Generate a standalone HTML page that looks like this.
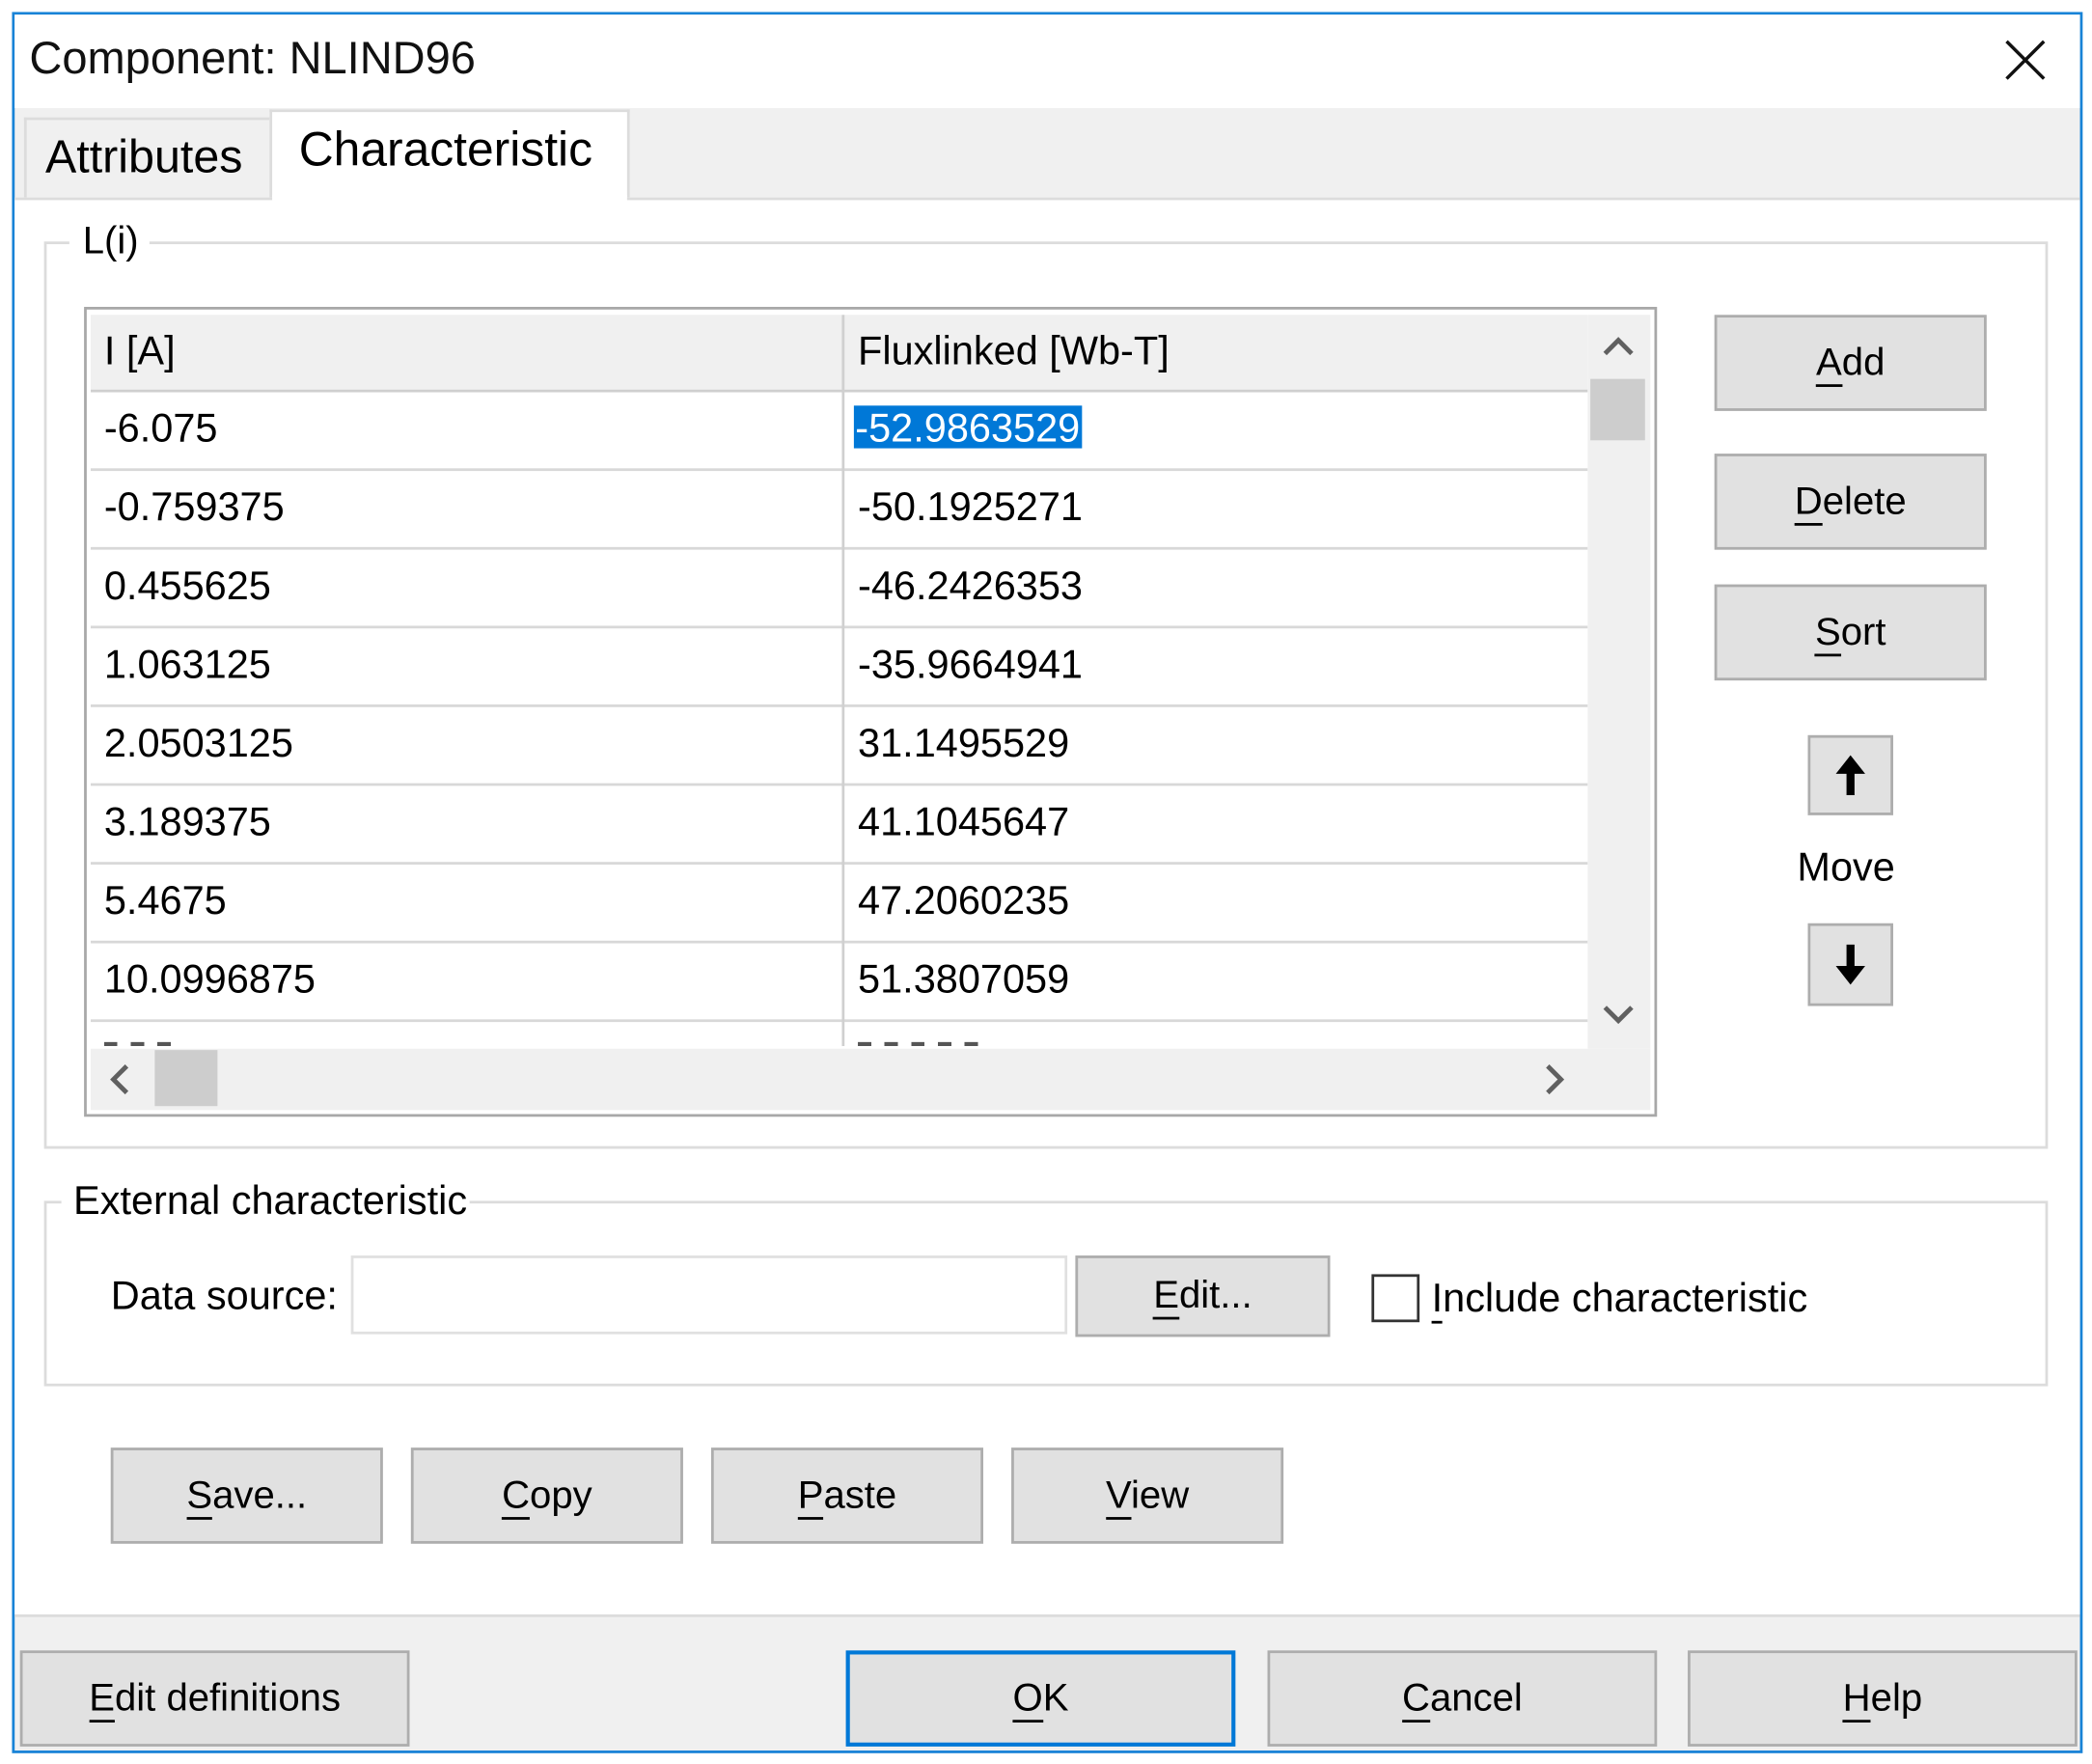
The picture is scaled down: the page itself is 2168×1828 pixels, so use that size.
<!DOCTYPE html>
<html><head><meta charset="utf-8"><style>
html,body{margin:0;padding:0;background:#fff;width:2168px;height:1828px;overflow:hidden}
#s{position:absolute;left:0;top:0;width:1568px;height:1322px;transform:scale(1.38265);transform-origin:0 0;font-family:"Liberation Sans",sans-serif;color:#000}
.a{position:absolute;box-sizing:border-box}
.t{position:absolute;white-space:nowrap;font-size:29px;line-height:1}
.btn{position:absolute;box-sizing:border-box;background:#e1e1e1;border:2px solid #adadad;display:flex;align-items:center;justify-content:center;font-size:29px}
.hl{position:absolute;left:68px;width:1122px;height:2px;background:#d8d8d8}
u{text-decoration:none;border-bottom:2px solid #000;line-height:0.95}
</style></head><body><div id="s">
<div class="a" style="left:9px;top:9px;width:1552px;height:1305px;border:2px solid #1883d7;background:#f0f0f0"></div>
<div class="a" style="left:11px;top:11px;width:1548px;height:70px;background:#fff"></div>
<div class="t" style="left:22px;top:27px;font-size:34px;color:#111">Component: NLIND96</div>
<svg class="a" style="left:1502px;top:29px" width="32" height="32"><path d="M2 2L30 30M30 2L2 30" stroke="#111" stroke-width="2.5"/></svg>
<div class="a" style="left:18px;top:88px;width:186px;height:62px;background:#f0f0f0;border:2px solid #dcdcdc;border-bottom:none"></div>
<div class="t" style="left:34px;top:100px;font-size:35px">Attributes</div>
<div class="a" style="left:202px;top:82px;width:270px;height:68px;background:#fff;border:2px solid #dcdcdc;border-bottom:none"></div>
<div class="a" style="left:11px;top:148px;width:1548px;height:1062px;background:#fff;border-top:2px solid #dcdcdc"></div>
<div class="a" style="left:204px;top:146px;width:266px;height:6px;background:#fff"></div>
<div class="t" style="left:224px;top:94px;font-size:36px">Characteristic</div>
<div class="a" style="left:33px;top:181px;width:1502px;height:680px;border:2px solid #dcdcdc"></div>
<div class="a" style="left:52px;top:165px;width:60px;height:30px;background:#fff"></div>
<div class="t" style="left:62px;top:167px;font-size:29px">L(i)</div>
<div class="a" style="left:63px;top:230px;width:1179px;height:607px;border:2px solid #a8a8a8;background:#fff"></div>
<div class="a" style="left:68px;top:236px;width:1122px;height:56px;background:#f0f0f0"></div>
<div class="hl" style="top:292px;background:#cfcfcf"></div>
<div class="hl" style="top:351px"></div><div class="hl" style="top:410px"></div><div class="hl" style="top:469px"></div><div class="hl" style="top:528px"></div><div class="hl" style="top:587px"></div><div class="hl" style="top:646px"></div><div class="hl" style="top:705px"></div><div class="hl" style="top:764px"></div>
<div class="a" style="left:631px;top:236px;width:2px;height:548px;background:#d0d0d0"></div>
<div class="t" style="left:78px;top:249px;font-size:30px">I [A]</div>
<div class="t" style="left:643px;top:249px;font-size:30px">Fluxlinked [Wb-T]</div>
<div class="a" style="left:640px;top:304px;width:171px;height:32px;background:#0078d7"></div>
<div class="t" style="left:78px;top:307px;font-size:30px">-6.075</div><div class="t" style="left:641px;top:307px;color:#fff;font-size:30px">-52.9863529</div>
<div class="t" style="left:78px;top:366px;font-size:30px">-0.759375</div><div class="t" style="left:643px;top:366px;font-size:30px">-50.1925271</div>
<div class="t" style="left:78px;top:425px;font-size:30px">0.455625</div><div class="t" style="left:643px;top:425px;font-size:30px">-46.2426353</div>
<div class="t" style="left:78px;top:484px;font-size:30px">1.063125</div><div class="t" style="left:643px;top:484px;font-size:30px">-35.9664941</div>
<div class="t" style="left:78px;top:543px;font-size:30px">2.0503125</div><div class="t" style="left:643px;top:543px;font-size:30px">31.1495529</div>
<div class="t" style="left:78px;top:602px;font-size:30px">3.189375</div><div class="t" style="left:643px;top:602px;font-size:30px">41.1045647</div>
<div class="t" style="left:78px;top:661px;font-size:30px">5.4675</div><div class="t" style="left:643px;top:661px;font-size:30px">47.2060235</div>
<div class="t" style="left:78px;top:720px;font-size:30px">10.0996875</div><div class="t" style="left:643px;top:720px;font-size:30px">51.3807059</div>
<div class="a" style="left:78px;top:781px;width:60px;height:3px;background:repeating-linear-gradient(90deg,#555 0 10px,#fff 10px 20px)"></div>
<div class="a" style="left:643px;top:781px;width:92px;height:3px;background:repeating-linear-gradient(90deg,#555 0 10px,#fff 10px 20px)"></div>
<div class="a" style="left:1190px;top:236px;width:47px;height:550px;background:#f0f0f0"></div>
<div class="a" style="left:1192px;top:284px;width:41px;height:46px;background:#cdcdcd"></div>
<svg class="a" style="left:1200px;top:250px" width="26" height="20"><path d="M3 15L13 5L23 15" stroke="#606060" stroke-width="3.5" fill="none"/></svg>
<svg class="a" style="left:1200px;top:750px" width="26" height="20"><path d="M3 5L13 15L23 5" stroke="#606060" stroke-width="3.5" fill="none"/></svg>
<div class="a" style="left:68px;top:786px;width:1169px;height:46px;background:#f0f0f0"></div>
<div class="a" style="left:116px;top:787px;width:47px;height:42px;background:#cdcdcd"></div>
<svg class="a" style="left:80px;top:796px" width="20" height="26"><path d="M15 3L5 13L15 23" stroke="#606060" stroke-width="3.5" fill="none"/></svg>
<svg class="a" style="left:1155px;top:796px" width="20" height="26"><path d="M5 3L15 13L5 23" stroke="#606060" stroke-width="3.5" fill="none"/></svg>
<div class="btn" style="left:1285px;top:236px;width:204px;height:72px"><span><u>A</u>dd</span></div>
<div class="btn" style="left:1285px;top:340px;width:204px;height:72px"><span><u>D</u>elete</span></div>
<div class="btn" style="left:1285px;top:438px;width:204px;height:72px"><span><u>S</u>ort</span></div>
<div class="btn" style="left:1355px;top:551px;width:64px;height:60px"><svg width="30" height="36"><path d="M15 3L4 17H12V33H18V17H26Z" fill="#000"/></svg></div>
<div class="t" style="left:1347px;top:636px;font-size:30px">Move</div>
<div class="btn" style="left:1355px;top:692px;width:64px;height:62px"><svg width="30" height="36"><path d="M15 33L4 19H12V3H18V19H26Z" fill="#000"/></svg></div>
<div class="a" style="left:33px;top:900px;width:1502px;height:139px;border:2px solid #dcdcdc"></div>
<div class="a" style="left:46px;top:884px;width:306px;height:32px;background:#fff"></div>
<div class="t" style="left:55px;top:886px;font-size:30px">External characteristic</div>
<div class="t" style="left:83px;top:957px;font-size:30px">Data source:</div>
<div class="a" style="left:263px;top:941px;width:537px;height:59px;border:2px solid #e0e0e0;background:#fff"></div>
<div class="btn" style="left:806px;top:941px;width:191px;height:61px"><span><u>E</u>dit...</span></div>
<div class="a" style="left:1028px;top:955px;width:36px;height:36px;border:2px solid #333;background:#fff"></div>
<div class="t" style="left:1073px;top:959px;font-size:30px"><u>I</u>nclude characteristic</div>
<div class="btn" style="left:83px;top:1085px;width:204px;height:72px"><span><u>S</u>ave...</span></div>
<div class="btn" style="left:308px;top:1085px;width:204px;height:72px"><span><u>C</u>opy</span></div>
<div class="btn" style="left:533px;top:1085px;width:204px;height:72px"><span><u>P</u>aste</span></div>
<div class="btn" style="left:758px;top:1085px;width:204px;height:72px"><span><u>V</u>iew</span></div>
<div class="a" style="left:11px;top:1210px;width:1548px;height:2px;background:#dcdcdc"></div>
<div class="btn" style="left:15px;top:1237px;width:292px;height:72px"><span><u>E</u>dit definitions</span></div>
<div class="btn" style="left:634px;top:1237px;width:292px;height:72px;border:3px solid #0078d7"><span><u>O</u>K</span></div>
<div class="btn" style="left:950px;top:1237px;width:292px;height:72px"><span><u>C</u>ancel</span></div>
<div class="btn" style="left:1265px;top:1237px;width:292px;height:72px"><span><u>H</u>elp</span></div>
</div></body></html>
